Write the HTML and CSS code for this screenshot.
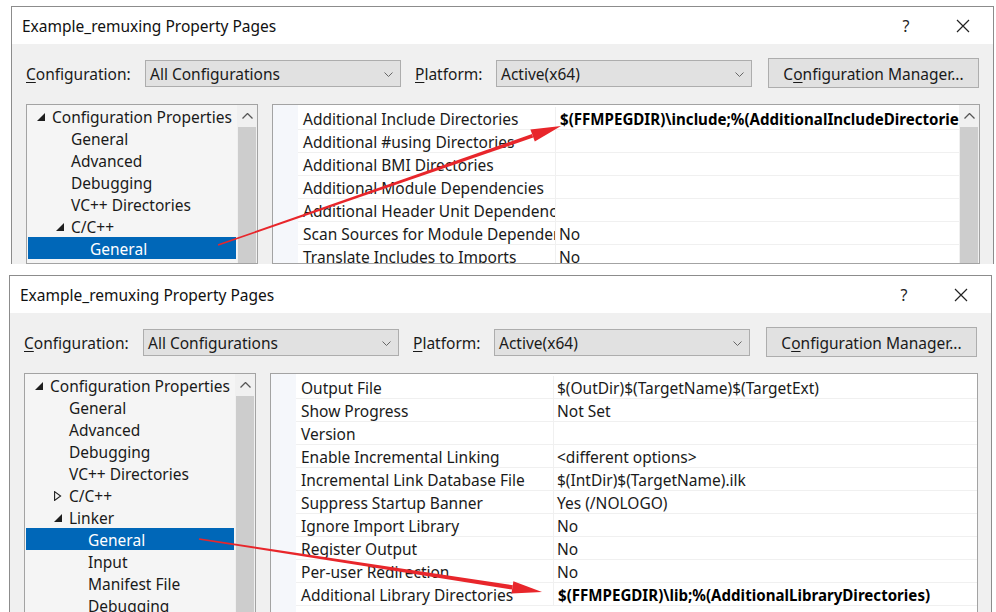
FILE: index.html
```html
<!DOCTYPE html>
<html>
<head>
<meta charset="utf-8">
<title>Property Pages</title>
<link rel="stylesheet" href="styles.css">
</head>
<body>
<div class="page">

  <div class="dlg dlg-top">
    <div class="titlebar">
      <span class="title">Example_remuxing Property Pages</span>
      <span class="tbtn help">?</span>
      <span class="tbtn close"><svg width="14" height="14" viewBox="0 0 14 14"><path d="M1 1 L13 13 M13 1 L1 13" stroke="#222" stroke-width="1.2" fill="none"/></svg></span>
    </div>
    <div class="toolbar">
      <span class="lbl lbl-conf"><u>C</u>onfiguration:</span>
      <div class="combo">All Configurations<svg class="chev" width="9" height="5" viewBox="0 0 9 5"><path d="M0.5 0.5 L4.5 4.5 L8.5 0.5" stroke="#666" fill="none"/></svg></div>
      <span class="lbl lbl-plat"><u>P</u>latform:</span>
      <div class="combo">Active(x64)<svg class="chev" width="9" height="5" viewBox="0 0 9 5"><path d="M0.5 0.5 L4.5 4.5 L8.5 0.5" stroke="#666" fill="none"/></svg></div>
      <div class="btn">C<u>o</u>nfiguration Manager...</div>
    </div>
    <div class="panels">
      <div class="tree">
        <div class="tree-list">
          <div class="node l0"><span class="tw"><svg width="8" height="8" viewBox="0 0 8 8"><polygon points="8,0 8,8 0,8" fill="#1e1e1e"/></svg></span>Configuration Properties</div>
          <div class="node l1"><span class="tw"></span>General</div>
          <div class="node l1"><span class="tw"></span>Advanced</div>
          <div class="node l1"><span class="tw"></span>Debugging</div>
          <div class="node l1"><span class="tw"></span>VC++ Directories</div>
          <div class="node l1"><span class="tw"><svg width="8" height="8" viewBox="0 0 8 8"><polygon points="8,0 8,8 0,8" fill="#1e1e1e"/></svg></span>C/C++</div>
          <div class="node l2 sel"><span class="tw"></span>General</div>
          <div class="node l2"><span class="tw"></span>Optimization</div>
        </div>
        <div class="vscroll">
          <div class="sarrow"><svg width="11" height="6" viewBox="0 0 11 6"><path d="M0.5 5.5 L5.5 0.5 L10.5 5.5" stroke="#555" stroke-width="1.3" fill="none"/></svg></div>
          <div class="thumb"></div>
        </div>
      </div>
      <div class="grid">
        <div class="grid-rows">
          <div class="row"><span class="gut"></span><span class="name">Additional Include Directories</span><span class="val b">$(FFMPEGDIR)\include;%(AdditionalIncludeDirectories)</span></div>
          <div class="row"><span class="gut"></span><span class="name">Additional #using Directories</span><span class="val"></span></div>
          <div class="row"><span class="gut"></span><span class="name">Additional BMI Directories</span><span class="val"></span></div>
          <div class="row"><span class="gut"></span><span class="name">Additional Module Dependencies</span><span class="val"></span></div>
          <div class="row"><span class="gut"></span><span class="name">Additional Header Unit Dependencies</span><span class="val"></span></div>
          <div class="row"><span class="gut"></span><span class="name">Scan Sources for Module Dependencies</span><span class="val">No</span></div>
          <div class="row"><span class="gut"></span><span class="name">Translate Includes to Imports</span><span class="val">No</span></div>
          <div class="row"><span class="gut"></span><span class="name">Enable Experimental C++ Standard Library Modules</span><span class="val"></span></div>
        </div>
        <div class="vscroll">
          <div class="sarrow"><svg width="11" height="6" viewBox="0 0 11 6"><path d="M0.5 5.5 L5.5 0.5 L10.5 5.5" stroke="#555" stroke-width="1.3" fill="none"/></svg></div>
          <div class="thumb"></div>
        </div>
      </div>
    </div>
  </div>

  <div class="dlg dlg-bottom">
    <div class="titlebar">
      <span class="title">Example_remuxing Property Pages</span>
      <span class="tbtn help">?</span>
      <span class="tbtn close"><svg width="14" height="14" viewBox="0 0 14 14"><path d="M1 1 L13 13 M13 1 L1 13" stroke="#222" stroke-width="1.2" fill="none"/></svg></span>
    </div>
    <div class="toolbar">
      <span class="lbl lbl-conf"><u>C</u>onfiguration:</span>
      <div class="combo">All Configurations<svg class="chev" width="9" height="5" viewBox="0 0 9 5"><path d="M0.5 0.5 L4.5 4.5 L8.5 0.5" stroke="#666" fill="none"/></svg></div>
      <span class="lbl lbl-plat"><u>P</u>latform:</span>
      <div class="combo">Active(x64)<svg class="chev" width="9" height="5" viewBox="0 0 9 5"><path d="M0.5 0.5 L4.5 4.5 L8.5 0.5" stroke="#666" fill="none"/></svg></div>
      <div class="btn">C<u>o</u>nfiguration Manager...</div>
    </div>
    <div class="panels">
      <div class="tree">
        <div class="tree-list">
          <div class="node l0"><span class="tw"><svg width="8" height="8" viewBox="0 0 8 8"><polygon points="8,0 8,8 0,8" fill="#1e1e1e"/></svg></span>Configuration Properties</div>
          <div class="node l1"><span class="tw"></span>General</div>
          <div class="node l1"><span class="tw"></span>Advanced</div>
          <div class="node l1"><span class="tw"></span>Debugging</div>
          <div class="node l1"><span class="tw"></span>VC++ Directories</div>
          <div class="node l1"><span class="tw"><svg width="8" height="10" viewBox="0 0 8 10"><polygon points="0.6,0.6 6.6,5 0.6,9.4" fill="none" stroke="#1e1e1e" stroke-width="1.1"/></svg></span>C/C++</div>
          <div class="node l1"><span class="tw"><svg width="8" height="8" viewBox="0 0 8 8"><polygon points="8,0 8,8 0,8" fill="#1e1e1e"/></svg></span>Linker</div>
          <div class="node l2 sel"><span class="tw"></span>General</div>
          <div class="node l2"><span class="tw"></span>Input</div>
          <div class="node l2"><span class="tw"></span>Manifest File</div>
          <div class="node l2"><span class="tw"></span>Debugging</div>
        </div>
        <div class="vscroll">
          <div class="sarrow"><svg width="11" height="6" viewBox="0 0 11 6"><path d="M0.5 5.5 L5.5 0.5 L10.5 5.5" stroke="#555" stroke-width="1.3" fill="none"/></svg></div>
          <div class="thumb"></div>
        </div>
      </div>
      <div class="grid">
        <div class="grid-rows">
          <div class="row"><span class="gut"></span><span class="name">Output File</span><span class="val">$(OutDir)$(TargetName)$(TargetExt)</span></div>
          <div class="row"><span class="gut"></span><span class="name">Show Progress</span><span class="val">Not Set</span></div>
          <div class="row"><span class="gut"></span><span class="name">Version</span><span class="val"></span></div>
          <div class="row"><span class="gut"></span><span class="name">Enable Incremental Linking</span><span class="val">&lt;different options&gt;</span></div>
          <div class="row"><span class="gut"></span><span class="name">Incremental Link Database File</span><span class="val">$(IntDir)$(TargetName).ilk</span></div>
          <div class="row"><span class="gut"></span><span class="name">Suppress Startup Banner</span><span class="val">Yes (/NOLOGO)</span></div>
          <div class="row"><span class="gut"></span><span class="name">Ignore Import Library</span><span class="val">No</span></div>
          <div class="row"><span class="gut"></span><span class="name">Register Output</span><span class="val">No</span></div>
          <div class="row"><span class="gut"></span><span class="name">Per-user Redirection</span><span class="val">No</span></div>
          <div class="row"><span class="gut"></span><span class="name">Additional Library Directories</span><span class="val b">$(FFMPEGDIR)\lib;%(AdditionalLibraryDirectories)</span></div>
        </div>
      </div>
    </div>
  </div>

  <svg class="arrows" width="996" height="612" viewBox="0 0 996 612">
    <polygon fill="#e8262b" points="217.8,244.3 218.3,245.7 533.2,137.6 532.0,134.0"/>
    <polygon fill="#e8262b" points="530.4,129.6 561,126 534.8,141.6"/>
    <polygon fill="#e8262b" points="199.1,538.3 198.9,539.7 512.0,589.6 512.8,585.2"/>
    <polygon fill="#e8262b" points="513.4,581.3 542,592 511.4,593.5"/>
  </svg>
</div>
</body>
</html>
```

FILE: styles.css
```css
* { box-sizing: border-box; }

html, body {
  margin: 0;
  padding: 0;
  background: #ffffff;
}

body {
  font-family: "Noto Sans", "Open Sans", "Liberation Sans", sans-serif;
  font-size: 15.5px;
  color: #1a1a1a;
}

.page {
  position: relative;
  width: 996px;
  height: 612px;
  overflow: hidden;
  padding-top: 6px;
}

.dlg {
  width: 983px;
  background: #f0f0f0;
  border: 1px solid #8c8c8c;
  border-bottom: none;
  overflow: hidden;
  display: flex;
  flex-direction: column;
}

.dlg-top {
  margin-left: 11px;
  height: 258px;
}

.dlg-bottom {
  margin-left: 9px;
  margin-top: 11px;
  height: 340px;
}

.titlebar {
  height: 37px;
  flex: none;
  background: #ffffff;
  display: flex;
  align-items: center;
  padding-left: 10px;
}

.title {
  flex: 1;
  font-size: 15.5px;
  color: #111;
}

.tbtn {
  width: 46px;
  height: 37px;
  display: flex;
  align-items: center;
  justify-content: center;
  color: #222;
}

.help {
  font-size: 16px;
  margin-right: 11px;
}

.close {
  margin-right: 7px;
}

.toolbar {
  flex: none;
  margin-top: 14px;
  height: 30px;
  display: flex;
  align-items: center;
  padding-left: 14px;
}

.lbl {
  flex: none;
  white-space: nowrap;
  padding-top: 2px;
}

.lbl u, .btn u {
  text-underline-offset: 2px;
}

.lbl-conf { width: 119px; }
.lbl-plat { width: 81px; margin-left: 14px; }

.combo {
  position: relative;
  flex: none;
  width: 256px;
  height: 27px;
  background: #e1e1e1;
  border: 1px solid #adadad;
  display: flex;
  align-items: center;
  padding-left: 4px;
  padding-top: 2px;
  white-space: nowrap;
}

.chev {
  position: absolute;
  right: 7px;
  top: 11px;
}

.btn {
  flex: none;
  margin-left: 16px;
  width: 211px;
  height: 30px;
  background: #e1e1e1;
  border: 1px solid #adadad;
  display: flex;
  align-items: center;
  justify-content: center;
  padding-top: 2px;
  white-space: nowrap;
}

.panels {
  flex: 1;
  display: flex;
  margin-top: 16px;
  padding-left: 14px;
  padding-right: 13px;
  min-height: 0;
}

.tree {
  flex: none;
  width: 232px;
  border: 1px solid #a3a3a3;
  background: #f5f5f5;
  display: flex;
  overflow: hidden;
}

.tree-list {
  flex: 1;
  min-width: 0;
}

.node {
  height: 22px;
  display: flex;
  align-items: center;
  padding-top: 2px;
  white-space: nowrap;
  color: #1a1a1a;
}

.node.l0 { padding-left: 10px; }
.node.l1 { padding-left: 29px; }
.node.l2 { padding-left: 48px; }

.node.sel {
  background: #0067b8;
  color: #ffffff;
  margin: 0 1px;
  padding-left: 47px;
}

.tw {
  flex: none;
  width: 15px;
  display: flex;
  align-items: center;
  margin-top: -1px;
}

.vscroll {
  flex: none;
  width: 20px;
  background: #f0f0f0;
  display: flex;
  flex-direction: column;
}

.sarrow {
  flex: none;
  height: 22px;
  display: flex;
  align-items: center;
  justify-content: center;
}

.thumb {
  flex: 1;
  margin: 0 1px;
  background: #cdcdcd;
}

.grid {
  flex: 1;
  margin-left: 14px;
  border: 1px solid #a3a3a3;
  background: #ffffff;
  display: flex;
  overflow: hidden;
}

.grid-rows {
  flex: 1;
  min-width: 0;
  padding-top: 2px;
  background: linear-gradient(to right, #f5f7fb 25px, #ffffff 25px);
}

.row {
  height: 23px;
  display: flex;
  white-space: nowrap;
}

.gut {
  flex: none;
  width: 25px;
}

.name {
  flex: none;
  width: 258px;
  padding-left: 5px;
  overflow: hidden;
  border-bottom: 1px solid #f0f0f0;
  border-right: 1px solid #f0f0f0;
  line-height: 24px;
}

.val {
  flex: 1;
  min-width: 0;
  padding-left: 3px;
  overflow: hidden;
  border-bottom: 1px solid #f0f0f0;
  line-height: 24px;
}

.val.b {
  font-weight: bold;
  font-size: 15.1px;
  padding-left: 4px;
  color: #000;
}

.arrows {
  position: absolute;
  left: 0;
  top: 0;
  pointer-events: none;
}
```
